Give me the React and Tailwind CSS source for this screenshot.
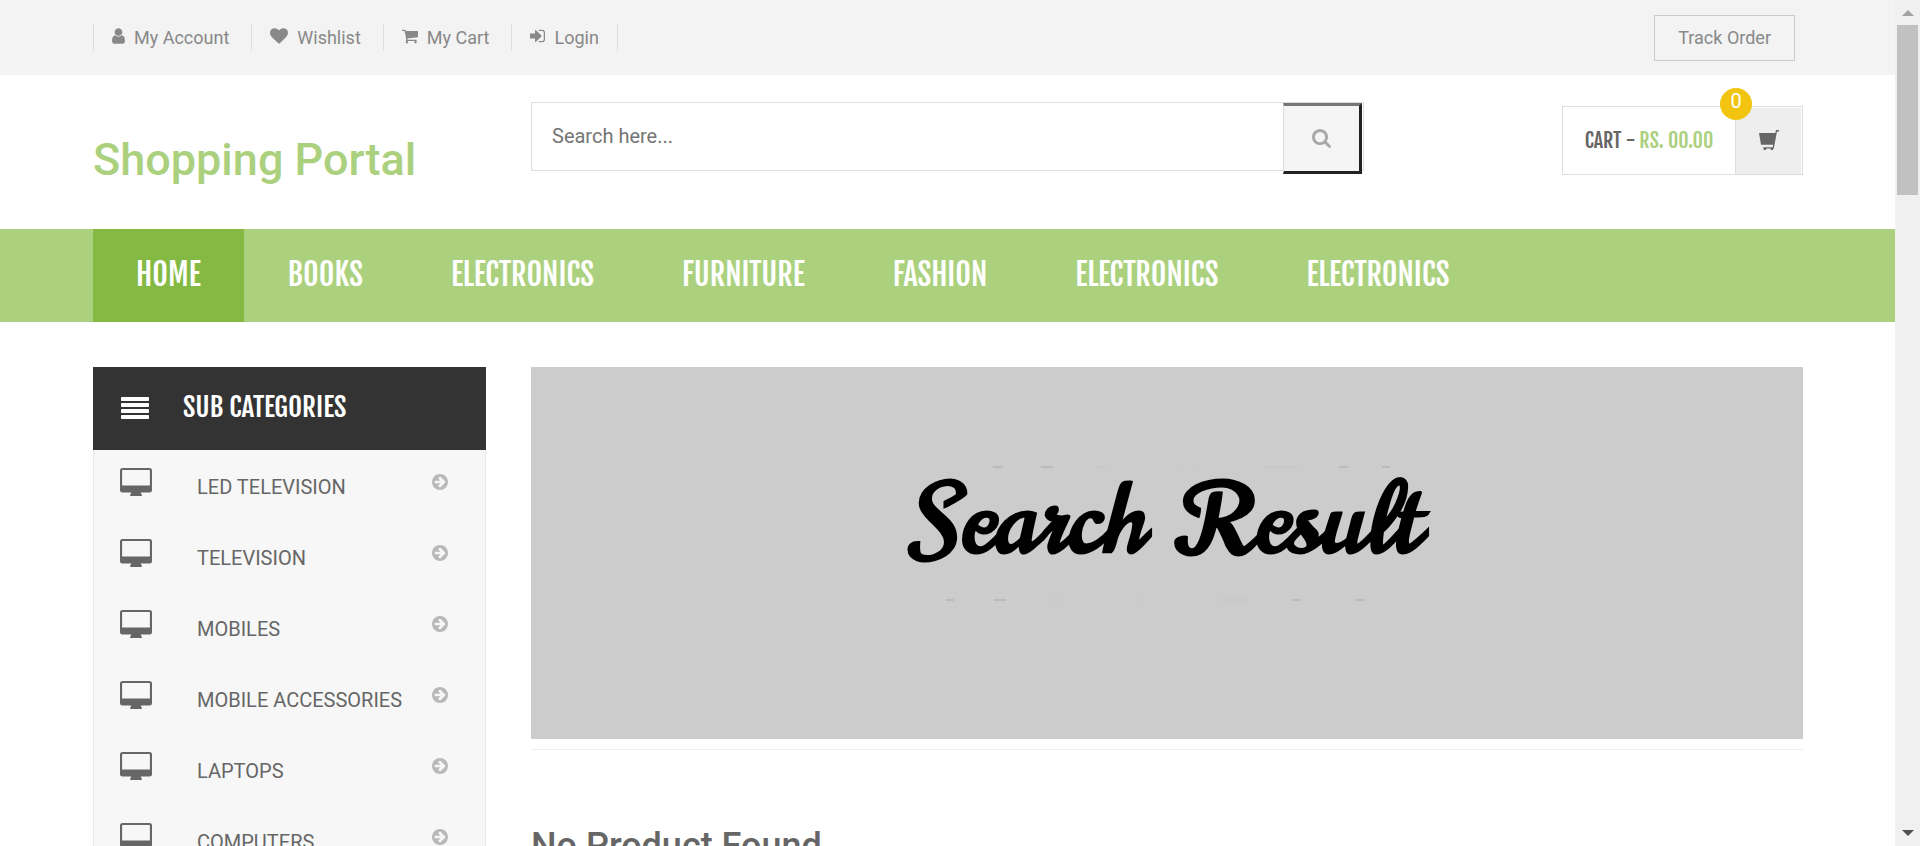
import React from 'react';

const ICONS = {
  user: {
    box: '256 0 1280 1792',
    d: 'M1536 1399q0 109-62.5 187t-150.5 78h-854q-88 0-150.5-78t-62.5-187q0-85 8.5-160.5t31.5-152 58.5-131 94-89 134.5-34.5q131 128 313 128t313-128q76 0 134.5 34.5t94 89 58.5 131 31.5 152 8.5 160.5zm-256-887q0 159-112.5 271.5t-271.5 112.5-271.5-112.5-112.5-271.5 112.5-271.5 271.5-112.5 271.5 112.5 112.5 271.5z',
  },
  heart: {
    box: '0 0 1792 1792',
    d: 'M896 1664q-26 0-44-18l-624-602q-10-8-27.5-26t-55.5-65.5-68-97.5-53.5-121-23.5-138q0-220 127-344t351-124q62 0 126.5 21.5t120 58 95.5 68.5 76 68q36-36 76-68t95.5-68.5 120-58 126.5-21.5q224 0 351 124t127 344q0 221-229 450l-623 600q-18 18-44 18z',
  },
  cart: {
    box: '64 0 1664 1792',
    d: 'M704 1536q0 52-38 90t-90 38-90-38-38-90 38-90 90-38 90 38 38 90zm896 0q0 52-38 90t-90 38-90-38-38-90 38-90 90-38 90 38 38 90zm128-1088v512q0 24-16.5 42.5t-40.5 21.5l-1044 122q13 60 13 70 0 16-24 64h920q26 0 45 19t19 45-19 45-45 19h-1024q-26 0-45-19t-19-45q0-11 8-31.5t16-36 21.5-40 15.5-29.5l-177-823h-204q-26 0-45-19t-19-45 19-45 45-19h256q16 0 28.5 6.5t19.5 15.5 13 24.5 8 26 5.5 29.5 4.5 26h1201q26 0 45 19t19 45z',
  },
  login: {
    box: '128 0 1536 1792',
    d: 'M1312 896q0 26-19 45l-544 544q-19 19-45 19t-45-19-19-45v-288h-448q-26 0-45-19t-19-45v-384q0-26 19-45t45-19h448v-288q0-26 19-45t45-19 45 19l544 544q19 19 19 45zm352-352v704q0 119-84.5 203.5t-203.5 84.5h-320q-13 0-22.5-9.5t-9.5-22.5q0-4-1-20t-.5-26.5 3-23.5 10-19.5 20.5-6.5h320q66 0 113-47t47-113v-704q0-66-47-113t-113-47h-312l-11.5-1-11.5-3-8-5.5-7-9-2-13.5q0-4-1-20t-.5-26.5 3-23.5 10-19.5 20.5-6.5h320q119 0 203.5 84.5t84.5 203.5z',
  },
  search: {
    box: '64 128 1664 1664',
    d: 'M1216 832q0-185-131.5-316.5t-316.5-131.5-316.5 131.5-131.5 316.5 131.5 316.5 316.5 131.5 316.5-131.5 131.5-316.5zm512 832q0 52-38 90t-90 38q-54 0-90-38l-343-342q-179 124-399 124-143 0-273.5-55.5t-225-150-150-225-55.5-273.5 55.5-273.5 150-225 225-150 273.5-55.5 273.5 55.5 225 150 150 225 55.5 273.5q0 220-124 399l343 343q37 37 37 90z',
  },
  arrow: {
    box: '128 128 1536 1536',
    d: 'M1413 896q0-27-18-45l-91-91-362-362q-18-18-45-18t-45 18l-91 91q-18 18-18 45t18 45l189 189h-502q-26 0-45 19t-19 45v128q0 26 19 45t45 19h502l-189 189q-19 19-19 45t19 45l91 91q18 18 45 18t45-18l362-362 91-91q18-18 18-45zm251 0q0 209-103 385.5t-279.5 279.5-385.5 103-385.5-103-279.5-279.5-103-385.5 103-385.5 279.5-279.5 385.5-103 385.5 103 279.5 279.5 103 385.5z',
  },
};

function Icon({ name, className }) {
  return (
    <svg className={className} viewBox={ICONS[name].box} fill="currentColor" aria-hidden="true">
      <path d={ICONS[name].d} />
    </svg>
  );
}

function Desktop() {
  return (
    <svg className="mt-[18px] h-7 w-8 shrink-0 text-[#666]" viewBox="0 0 32 28" aria-hidden="true">
      <path
        fill="currentColor"
        fillRule="evenodd"
        d="M2.5 0h27A2.5 2.5 0 0 1 32 2.5V22a2.5 2.5 0 0 1-2.5 2.5h-8.8q.1 1.2 1.1 2.1V28H10.2v-1.4q1-.9 1.1-2.1H2.5A2.5 2.5 0 0 1 0 22V2.5A2.5 2.5 0 0 1 2.5 0ZM2.7 2a.6.6 0 0 0-.6.6V17.6h27.8V2.6a.6.6 0 0 0-.6-.6Z"
      />
    </svg>
  );
}

function Basket() {
  return (
    <svg className="size-5 text-[#666]" viewBox="0 0 20 20" fill="currentColor" aria-hidden="true">
      <path d="M17 0h3v1.4h-2L14.8 18.4H5.2q-1.3 0-1.3-.6t1.2-.6h8.6l.4-2.4H2L0 3h16.4z" />
      <path d="M4.5 18h2.7v2H5q-.5-1-.5-2zM11.7 18h2.7q0 1-.5 2h-2.2z" />
    </svg>
  );
}

const TOP_LINKS = [
  { label: 'My Account', icon: 'user', size: 'h-[18px] w-[13px]' },
  { label: 'Wishlist', icon: 'heart', size: 'size-[18px]' },
  { label: 'My Cart', icon: 'cart', size: 'h-[18px] w-4' },
  { label: 'Login', icon: 'login', size: 'h-[18px] w-[15px]' },
];

const NAV = [
  { label: 'HOME', active: true },
  { label: 'BOOKS' },
  { label: 'ELECTRONICS' },
  { label: 'FURNITURE' },
  { label: 'FASHION' },
  { label: 'ELECTRONICS' },
  { label: 'ELECTRONICS' },
];

const CATEGORIES = ['LED TELEVISION', 'TELEVISION', 'MOBILES', 'MOBILE ACCESSORIES', 'LAPTOPS', 'COMPUTERS'];

const CONDENSED = "font-['Fjalla_One','Liberation_Sans_Narrow',sans-serif] font-normal";

function TopBar() {
  return (
    <div className="flex h-[75px] items-center justify-between bg-[#f3f3f3] pr-[100px] pl-[93px] text-lg text-[#888]">
      <ul className="flex border-r border-[#ddd]">
        {TOP_LINKS.map((l) => (
          <li key={l.label} className="flex h-[27px] items-center border-l border-[#ddd] pr-[22px] pl-[18px] last:pr-[18px]">
            <a href="#" className="flex items-center gap-[9px]">
              <Icon name={l.icon} className={`${l.size} mb-[3px]`} />
              {l.label}
            </a>
          </li>
        ))}
      </ul>
      <a href="#" className="flex h-[46px] items-center border border-[#ccc] px-[23px]">
        Track Order
      </a>
    </div>
  );
}

function Header() {
  return (
    <header className="flex h-[154px] items-start pr-[92px] pl-[93px]">
      <h1 className="mt-[58px] w-[438px] shrink-0 text-[45px] leading-[54px] font-medium text-[#abd07e]">
        <a href="#">Shopping Portal</a>
      </h1>
      <form className="mt-[27px] flex h-[69px] max-w-[833px] flex-1 border border-[#ddd] pr-px">
        <input
          type="text"
          aria-label="Search"
          placeholder="Search here..."
          className="min-w-0 flex-1 px-5 pb-[2px] text-xl outline-none placeholder:text-[#757575]"
        />
        <button
          type="button"
          aria-label="Search"
          className="flex h-[71px] w-[79px] items-center justify-center border-3 border-l border-t-[#767676] border-r-[#222] border-b-[#222] border-l-[#ddd] bg-[#f5f5f5] text-[#a9a9a9]"
        >
          <Icon name="search" className="size-[19px]" />
        </button>
      </form>
      <a href="#" className="relative mt-[31px] ml-auto flex h-[69px] border border-[#ddd]">
        <span className={`flex w-[172px] items-center justify-center gap-1 text-xl text-[#666] ${CONDENSED}`}>
          <span>CART -</span>
          <span className="text-[#abd07e]">RS. 00.00</span>
        </span>
        <span className="mt-px mr-px flex w-[66px] items-center justify-center border-l border-[#ddd] bg-[#eee] pb-[2px]">
          <Basket />
        </span>
        <span className="absolute -top-[19px] right-[50px] flex size-8 justify-center rounded-full bg-[#f1c40f] text-xl leading-[27px] text-white">
          0
        </span>
      </a>
    </header>
  );
}

function Nav() {
  return (
    <nav className="bg-[#abd17e] pl-[93px]">
      <ul className="flex">
        {NAV.map((n, i) => (
          <li key={i}>
            <a
              href="#"
              className={`flex h-[93px] items-center justify-center pb-[2px] text-3xl text-white ${CONDENSED} ${n.active ? 'bg-[#84b943] px-[43px]' : 'px-11'}`}
            >
              {n.label}
            </a>
          </li>
        ))}
      </ul>
    </nav>
  );
}

function Sidebar() {
  return (
    <aside className="w-[393px] shrink-0">
      <h2 className={`flex h-[83px] items-center gap-[34px] bg-[#333] pb-[2px] pl-7 text-[27px] text-white ${CONDENSED}`}>
        <svg className="h-[22px] w-7" viewBox="0 0 28 22" fill="currentColor" aria-hidden="true">
          <rect width="28" height="4" rx="0.8" />
          <rect y="6" width="28" height="4" rx="0.8" />
          <rect y="12" width="28" height="4" rx="0.8" />
          <rect y="18" width="28" height="4" rx="0.8" />
        </svg>
        SUB CATEGORIES
      </h2>
      <ul className="border-x border-[#e9e9e9] bg-[#f7f7f7]">
        {CATEGORIES.map((c) => (
          <li key={c}>
            <a href="#" className="flex h-[71px] items-start pr-[37px] pl-[26px]">
              <Desktop />
              <span className="mt-[23px] ml-[45px] flex-1 text-xl leading-7 text-[#666]">{c}</span>
              <Icon name="arrow" className="mt-6 size-4 shrink-0 text-[#b9b9b9]" />
            </a>
          </li>
        ))}
      </ul>
    </aside>
  );
}

function Banner() {
  return (
    <div className="flex h-[372px] flex-col items-center bg-[#ccc] pt-[98px]">
      <svg className="h-1 w-[450px]" viewBox="0 0 450 4" aria-hidden="true">
        <path d="M51 2h10M99 2h12M397 2h9M440 2h8" stroke="#aaa" strokeWidth="1" />
        <path d="M154 2h12M236 2h4M254 2h4M324 2h34" stroke="#c4c4c4" strokeWidth="1" />
      </svg>
      <p className="mb-6 flex gap-9 font-['Norican','Liberation_Serif',serif] text-[96px] leading-[105px] font-bold text-black">
        <span>Search</span> <span>Result</span>
      </p>
      <svg className="h-1 w-[450px]" viewBox="0 0 450 4" aria-hidden="true">
        <path d="M4 2h8M52 2h12M350 2h9M413 2h10" stroke="#aaa" strokeWidth="1" />
        <path d="M109 2h10M195 2h4M215 2h4M277 2h30" stroke="#c4c4c4" strokeWidth="1" />
      </svg>
    </div>
  );
}

function Scrollbar() {
  return (
    <div className="flex w-[25px] shrink-0 flex-col items-center bg-[#f0f0f0]" aria-hidden="true">
      <svg className="mt-[10px] h-[6px] w-3 text-[#a3a3a3]" viewBox="0 0 12 6" fill="currentColor">
        <path d="M6 0l6 6H0z" />
      </svg>
      <div className="mt-[9px] h-[170px] w-[21px] bg-[#c1c1c1]" />
      <svg className="mt-auto mb-[10px] h-[6px] w-3 text-[#505050]" viewBox="0 0 12 6" fill="currentColor">
        <path d="M0 0h12L6 6z" />
      </svg>
    </div>
  );
}

export default function App() {
  return (
    <div className="flex h-screen overflow-hidden bg-white font-['Roboto',sans-serif]">
      <div className="min-w-0 flex-1">
        <TopBar />
        <Header />
        <Nav />
        <div className="flex gap-[45px] pt-[45px] pr-[92px] pl-[93px]">
          <Sidebar />
          <main className="min-w-0 flex-1">
            <Banner />
            <hr className="mt-[10px] border-[#eee]" />
            <h3 className="mt-[74px] text-4xl leading-[44px] font-medium text-[#666]">No Product Found</h3>
          </main>
        </div>
      </div>
      <Scrollbar />
    </div>
  );
}
